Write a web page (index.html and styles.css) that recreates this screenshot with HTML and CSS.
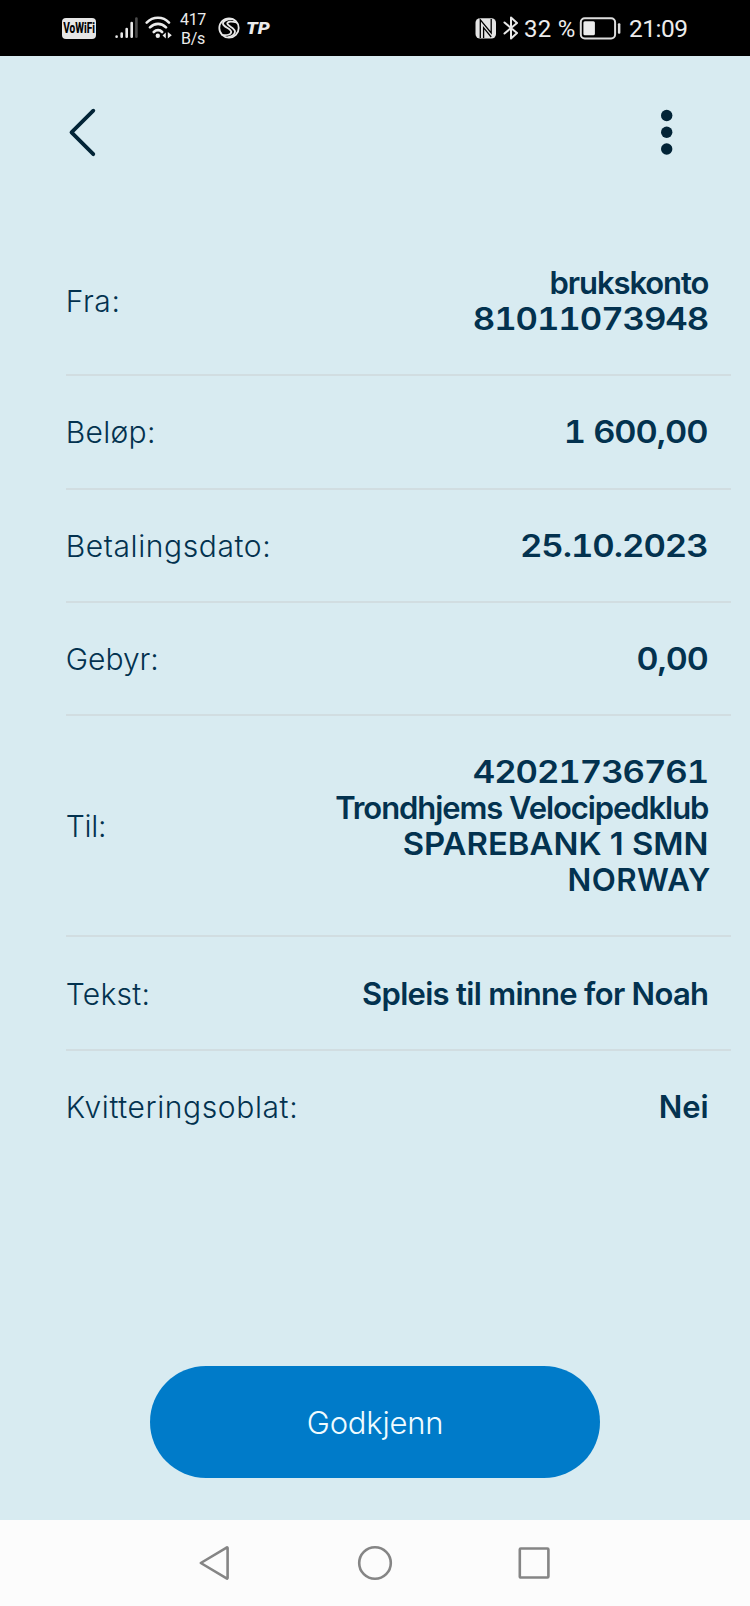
FILE: index.html
```html
<!DOCTYPE html>
<html lang="nb">
<head>
<meta charset="utf-8">
<title>Godkjenn betaling</title>
<link rel="stylesheet" href="styles.css">
</head>
<body>
<div class="screen">
  <div class="status">
    <div class="status-left">
      <span class="vowifi"><span>VoWiFi</span></span>
      <svg class="signal" width="23" height="22" viewBox="0 0 23 22" fill="none" stroke-width="2.6" stroke-linecap="round">
        <path stroke="#e8e8e8" d="M1.6 19.6v.2M6.7 16.5v3.3M11.7 12v7.8M16.7 6v13.8"/>
        <path stroke="#4c4c4c" d="M21.4 1.5v18.3"/>
      </svg>
      <svg class="wifi" width="28" height="24" viewBox="0 0 28 24" fill="none" stroke="#ececec" stroke-width="2.6" stroke-linecap="round">
        <path d="M1.7 6.6C8 .2 18 .2 24 6.6M5 11.4c4.700-4.700 11.400-4.700 16 0M8.800 16c2.500-2.500 6-2.500 8.300 0"/>
        <circle cx="12.800" cy="19.800" r="2.200" fill="#ececec" stroke="none"/>
        <path fill="#ececec" stroke="none" d="M20.800 16.500v6l-3.300-3zM22.800 16v6.500l4-3.200z"/>
      </svg>
      <span class="speed"><span>417</span><span>B/s</span></span>
      <svg class="globe" width="22" height="22" viewBox="0 0 22 22" fill="none" stroke="#e8e8e8" stroke-width="1.800" stroke-linecap="round">
        <circle cx="11" cy="11" r="9.700"/>
        <path d="M14.500 2.200C9 2 4.500 4 5 7c.6 3.200 8.500 4.500 8.200 8-.2 2.700-4.500 3.700-9 2.800M18.500 5.500C14 4 9.300 4.300 9.300 6.600c0 2.400 8.200 4.400 7.700 8.200-.3 2.400-3 4.400-6.500 5.400"/>
      </svg>
      <span class="tp">TP</span>
    </div>
    <div class="status-right">
      <svg class="nfc" width="22" height="21" viewBox="0 0 22 21">
        <rect x=".5" y=".3" width="20.500" height="20.200" rx="4.500" fill="#e4e4e4"/>
        <path d="M5.300 20V1.800l10.900 13.200V1M8.600 20V9.700l7.600 9.300" fill="none" stroke="#000" stroke-width="1.300"/>
      </svg>
      <svg class="bt" width="16" height="24" viewBox="0 0 16 24" fill="none" stroke="#e8e8e8" stroke-width="2" stroke-linejoin="round" stroke-linecap="round">
        <path d="M1.500 6.500 14 17l-6 5.500v-21L14 7 1.500 17.500"/>
      </svg>
      <span class="percent">32 %</span>
      <svg class="battery" width="42" height="23" viewBox="0 0 42 23">
        <rect x="1.800" y="1.200" width="34.300" height="20.300" rx="4" fill="none" stroke="#dedede" stroke-width="2"/>
        <rect x="4.400" y="4.300" width="11.500" height="14" rx="1.500" fill="#ececec"/>
        <rect x="38.900" y="6.300" width="2.500" height="10.500" rx="1" fill="#dedede"/>
      </svg>
      <span class="clock">21:09</span>
    </div>
  </div>

  <header class="topbar">
    <svg width="30" height="50" viewBox="0 0 30 50" fill="none" stroke="#022437" stroke-width="3.800" stroke-linecap="round" stroke-linejoin="round">
      <path d="M25.300 3.700 3.500 25.300l21.800 21.900"/>
    </svg>
    <svg width="14" height="50" viewBox="0 0 14 50" fill="#022437">
      <circle cx="6.700" cy="8.500" r="5.700"/><circle cx="6.700" cy="25.300" r="5.700"/><circle cx="6.700" cy="42" r="5.700"/>
    </svg>
  </header>

  <dl class="details">
    <div class="row"><dt>Fra:</dt><dd><span class="v-name">brukskonto</span><span class="num">81011073948</span></dd></div>
    <div class="row"><dt class="l-amount">Beløp:</dt><dd><span class="num v-amount">1 600,00</span></dd></div>
    <div class="row"><dt>Betalingsdato:</dt><dd><span class="num v-date">25.10.2023</span></dd></div>
    <div class="row"><dt class="l-fee">Gebyr:</dt><dd><span class="num v-fee">0,00</span></dd></div>
    <div class="row"><dt class="l-til">Til:</dt><dd><span class="num">42021736761</span><span class="v-club">Trondhjems Velocipedklub</span><span class="v-bank">SPAREBANK 1 SMN</span><span class="v-land">NORWAY</span></dd></div>
    <div class="row"><dt class="l-text">Tekst:</dt><dd><span class="v-text">Spleis til minne for Noah</span></dd></div>
    <div class="row"><dt>Kvitteringsoblat:</dt><dd><span class="v-nei">Nei</span></dd></div>
  </dl>

  <button class="approve" type="button">Godkjenn</button>

  <nav class="navbar">
    <svg width="36" height="40" viewBox="0 0 36 40" fill="none" stroke="#858585" stroke-width="2.600" stroke-linejoin="round">
      <path d="M2.800 20 28.600 4.600a.6.600 0 0 1 1 .5v29.800a.6.600 0 0 1-1 .5z"/>
    </svg>
    <svg width="36" height="40" viewBox="0 0 36 40" fill="none" stroke="#858585" stroke-width="2.600">
      <circle cx="18" cy="20" r="15.800"/>
    </svg>
    <svg width="36" height="40" viewBox="0 0 36 40" fill="none" stroke="#858585" stroke-width="2.600">
      <rect x="3.800" y="5.500" width="28.600" height="29" rx="1"/>
    </svg>
  </nav>
</div>
</body>
</html>
```
FILE: styles.css
```css
* { box-sizing: border-box; }
body { margin: 0; }
.screen {
  width: 750px;
  height: 1606px;
  display: flex;
  flex-direction: column;
  background: #d8ebf1;
  font-family: Inter, "Liberation Sans", sans-serif;
  color: #03324f;
}
svg { display: block; flex: none; }

.status {
  height: 56px;
  flex: none;
  display: flex;
  justify-content: space-between;
  padding: 0 64px 0 62px;
  background: #000;
  color: #ececec;
  font-family: Roboto, sans-serif;
}
.status-left, .status-right { display: flex; align-items: center; }
.vowifi {
  width: 34px;
  height: 21px;
  border-radius: 4px;
  background: #e6e6e6;
  color: #000;
  display: flex;
  align-items: center;
  justify-content: center;
  font-size: 14px;
  font-weight: 800;
}
.vowifi span { transform: scaleX(0.72); }
.signal { margin-left: 19px; }
.wifi { margin-left: 7px; }
.speed {
  width: 28px;
  margin-left: 6px;
  display: flex;
  flex-direction: column;
  align-items: center;
  font-size: 16px;
  line-height: 19px;
  letter-spacing: -0.3px;
  padding-top: 2px;
}
.globe { margin-left: 11px; }
.tp {
  margin-left: 6px;
  width: 26px;
  font: italic 900 17px/20px Roboto, sans-serif;
  transform: scaleX(1.12);
  transform-origin: left;
}
.bt { margin-left: 6px; }
.percent { width: 51px; margin-left: 5px; padding-top: 1px; font-size: 24px; letter-spacing: 0.3px; white-space: nowrap; }
.battery { margin-left: 4px; }
.clock { margin-left: 8px; width: 57px; padding-top: 1px; font-size: 24.500px; letter-spacing: -0.5px; }

.topbar {
  flex: none;
  display: flex;
  justify-content: space-between;
  padding: 51px 76px 0 68px;
  height: 171px;
}

.details { margin: 0 19px 0 66px; flex: none; }
.row {
  display: flex;
  justify-content: space-between;
  align-items: center;
  padding: 38.150px 22px 37.150px 0;
  border-bottom: 2px solid #d1dde1;
}
.row:last-child { border-bottom: 0; }
dt { margin-left: -0.300px; font-size: 30px; font-weight: 350; line-height: 36px; letter-spacing: 0.600px; }
dd {
  margin: 0;
  display: flex;
  flex-direction: column;
  align-items: flex-end;
  font-size: 31px;
  font-weight: 600;
  line-height: 36px;
  white-space: nowrap;
}
dd span { transform-origin: right; }
.l-amount { letter-spacing: 0.300px; }
.l-fee { letter-spacing: 0; }
.l-til { letter-spacing: -0.300px; }
.l-text { letter-spacing: 0.300px; }
.num { font-variant-numeric: tabular-nums; letter-spacing: -0.950px; transform: scaleX(1.12); margin-right: 1.200px; }
.v-amount { transform: scaleX(1.11); }
.v-date { transform: scaleX(1.12); }
.v-fee { transform: scaleX(1.1); }
.v-name { letter-spacing: -1.080px; margin-right: 0.700px; }
.v-club { letter-spacing: -1.080px; margin-right: 0.700px; }
.v-bank { letter-spacing: 0; transform: scaleX(1.06); }
.v-land { letter-spacing: 0.400px; transform: scaleX(1.01); margin-right: -1.500px; }
.v-text { letter-spacing: -0.700px; margin-right: 0.700px; }
.v-nei { letter-spacing: 0; margin-right: 0.300px; }

.approve {
  align-self: center;
  flex: none;
  width: 450px;
  height: 112px;
  margin-top: auto;
  margin-bottom: 42px;
  padding: 2px 0 0;
  border: 0;
  border-radius: 56px;
  background: #007bc9;
  color: #f0fbff;
  font: 300 31px/36px Inter, sans-serif;
  letter-spacing: -0.230px;
}
.navbar {
  flex: none;
  height: 86px;
  padding: 0 198px;
  display: flex;
  justify-content: space-between;
  align-items: center;
  background: #fcfcfc;
}
```
